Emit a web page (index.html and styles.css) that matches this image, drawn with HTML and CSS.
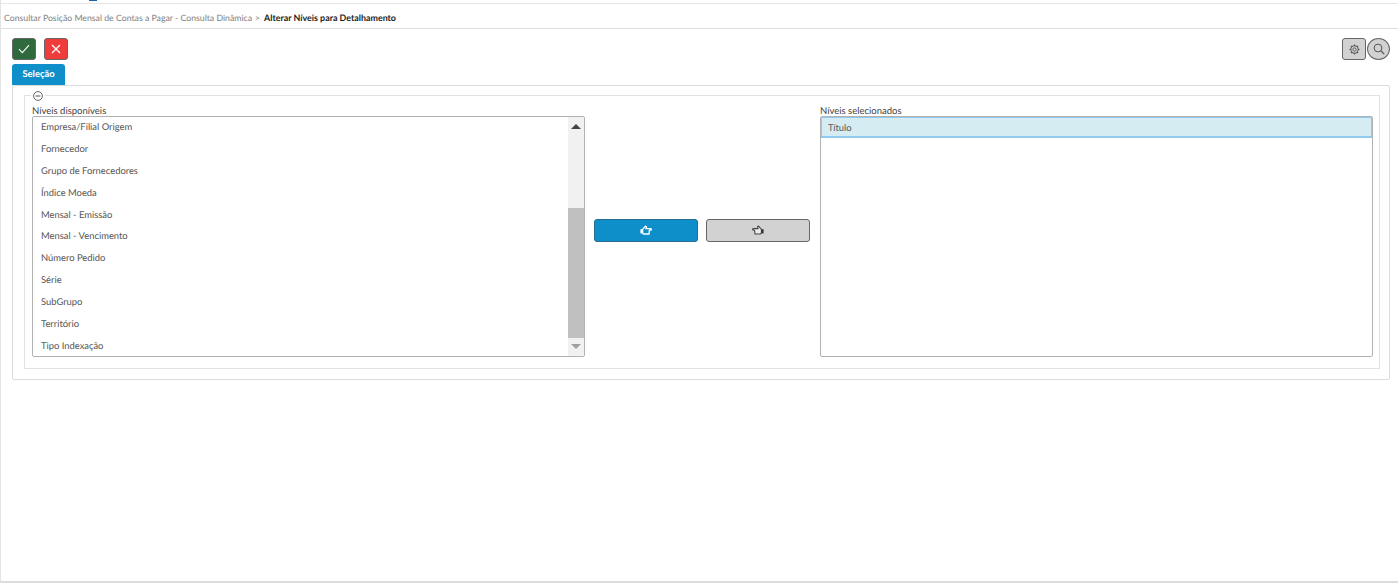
FILE: index.html
```html
<!DOCTYPE html>
<html lang="pt-BR">
<head>
<meta charset="utf-8">
<title>Alterar Níveis para Detalhamento</title>
<link rel="stylesheet" href="styles.css">
</head>
<body>
<div class="page">
  <div class="topstrip"><span class="logo-bit"></span></div>
  <nav class="crumbs">
    <span class="crumb-link">Consultar Posição Mensal de Contas a Pagar - Consulta Dinâmica</span>
    <span class="crumb-sep">&gt;</span>
    <strong class="crumb-current">Alterar Níveis para Detalhamento</strong>
  </nav>
  <main class="content">
    <div class="toolbar">
      <div class="actions">
        <button class="btn btn-ok" aria-label="Confirmar">
          <svg width="12" height="10" viewBox="0 0 12 10"><path d="M1 5.2 4.3 8.6 11 1.2" fill="none" stroke="#fff" stroke-width="1.1"/></svg>
        </button>
        <button class="btn btn-cancel" aria-label="Cancelar">
          <svg width="10" height="10" viewBox="0 0 10 10"><path d="M1 1 9 9M9 1 1 9" fill="none" stroke="#fff" stroke-width="1.3"/></svg>
        </button>
      </div>
      <div class="tools">
        <button class="tool tool-gear" aria-label="Configurar">
          <svg width="11" height="11" viewBox="0 0 12 12"><circle cx="6" cy="6" r="1.8" fill="none" stroke="#555" stroke-width="1"/><circle cx="6" cy="6" r="4" fill="none" stroke="#555" stroke-width="1.1"/><path d="M6 .5v1.6M6 9.9v1.6M.5 6h1.6M9.9 6h1.6M2.1 2.1l1.1 1.1M8.8 8.8l1.1 1.1M9.9 2.1 8.8 3.2M3.2 8.8l-1.1 1.1" stroke="#555" stroke-width="1.2"/></svg>
        </button>
        <button class="tool tool-search" aria-label="Pesquisar">
          <svg width="12" height="12" viewBox="0 0 12 12"><circle cx="5" cy="5" r="3.9" fill="none" stroke="#555" stroke-width="1"/><path d="M8 8l3.2 3.2" stroke="#555" stroke-width="1.2"/></svg>
        </button>
      </div>
    </div>
    <div class="tabs"><span class="tab">Seleção</span></div>
    <section class="panel">
      <div class="fieldset">
        <span class="legend" aria-hidden="true">
          <svg width="10" height="10" viewBox="0 0 10 10"><circle cx="5" cy="5" r="4.4" fill="none" stroke="#555" stroke-width=".9"/><path d="M2.6 5h4.8" stroke="#555" stroke-width="1"/></svg>
        </span>
        <div class="picker">
          <div class="column">
            <label class="field-label">Níveis disponíveis</label>
            <div class="listbox">
              <ul class="items">
                <li>Empresa/Filial Origem</li>
                <li>Fornecedor</li>
                <li>Grupo de Fornecedores</li>
                <li>Índice Moeda</li>
                <li>Mensal - Emissão</li>
                <li>Mensal - Vencimento</li>
                <li>Número Pedido</li>
                <li>Série</li>
                <li>SubGrupo</li>
                <li>Território</li>
                <li>Tipo Indexação</li>
              </ul>
              <div class="scrollbar">
                <span class="arrow arrow-up"></span>
                <span class="thumb"></span>
                <span class="arrow arrow-down"></span>
              </div>
            </div>
          </div>
          <div class="movers">
            <button class="move move-add" aria-label="Adicionar">
              <svg width="12" height="11" viewBox="0 0 12 11"><path d="M2.6 4.4 5.4 1.2l1 .4-.4 2h4.6a.8.8 0 0 1 0 1.6H9.4L9 9H3.6L2.6 8z" fill="none" stroke="#fff" stroke-width="1.3"/><path d="M.4 4.2h2.2v4.2H.4z" fill="#fff"/></svg>
            </button>
            <button class="move move-remove" aria-label="Remover">
              <svg class="flip" width="12" height="11" viewBox="0 0 12 11"><path d="M2.6 4.4 5.4 1.2l1 .4-.4 2h4.6a.8.8 0 0 1 0 1.6H9.4L9 9H3.6L2.6 8z" fill="#ececec" stroke="#444" stroke-width="1.1"/><path d="M.4 4.2h2.2v4.2H.4z" fill="#333"/></svg>
            </button>
          </div>
          <div class="column">
            <label class="field-label">Níveis selecionados</label>
            <div class="listbox">
              <ul class="items">
                <li class="selected">Título</li>
              </ul>
            </div>
          </div>
        </div>
      </div>
    </section>
  </main>
</div>
</body>
</html>
```

FILE: styles.css
```css
* { box-sizing: border-box; }
html, body { margin: 0; height: 100%; background: #fff; }
body { font-family: Lato, "Open Sans", "Liberation Sans", sans-serif; font-size: 9.4px; color: #555; overflow: hidden; text-rendering: geometricPrecision; }
button { font: inherit; padding: 0; cursor: pointer; display: flex; align-items: center; justify-content: center; }

.page { height: 583px; display: flex; flex-direction: column; border-left: 1px solid #e3e3e3; border-bottom: 2px solid #dcdcdc; margin-right: 1px; }

.topstrip { height: 4px; border-bottom: 1px solid #e6e6e6; margin-left: -1px; padding-left: 89px; }
.logo-bit { display: block; width: 8px; height: 1px; background: #1f5fa8; }

.crumbs { height: 25px; border-bottom: 1px solid #dedede; display: flex; align-items: center; gap: 3px; padding: 2px 0 0 3px; font-size: 8.73px; white-space: nowrap; }
.crumb-link { color: #808080; }
.crumb-sep { color: #777; padding-right: 1px; }
.crumb-current { color: #1c1c1c; font-weight: 700; font-size: 8.9px; }

.content { flex: 1; padding: 9px 8px 0 11px; }

.toolbar { display: flex; justify-content: space-between; height: 23px; }
.actions { display: flex; gap: 8px; }
.btn { width: 24px; height: 22px; border: 1px solid #666; border-radius: 3px; }
.btn-ok { background: #2f6a3c; }
.btn-cancel { background: #f13c3c; }
.tools { display: flex; gap: 1px; }
.tool { height: 22px; border: 1px solid #666; background: #d2d2d2; }
.tool-gear { width: 24px; border-radius: 3px; }
.tool-search { width: 23px; border-radius: 50%; }

.tabs { margin-top: 3px; display: flex; }
.tab { width: 53px; height: 21px; display: flex; align-items: center; justify-content: center; background: #0e8fca; color: #fff; font-weight: 700; font-size: 9.4px; border-radius: 3px 3px 0 0; }

.panel { height: 295px; border: 1px solid #dcdcdc; border-radius: 2px; padding: 9px 9px 9px 11px; }
.fieldset { position: relative; height: 274px; border: 1px solid #e2e2e2; padding: 8px 6px 11px 7px; }
.legend { position: absolute; left: 6px; top: -6px; width: 14px; height: 12px; background: #fff; display: flex; align-items: center; justify-content: center; }

.picker { display: grid; grid-template-columns: 553px 1fr 553px; height: 253px; }
.column { display: flex; flex-direction: column; min-width: 0; }
.field-label { height: 12px; line-height: 15px; font-size: 9.5px; color: #444; }

.listbox { flex: none; height: 241px; display: flex; border: 1px solid #b2b2b2; border-radius: 2px; background: #fff; overflow: hidden; }
.items { flex: 1; margin: 0; padding: 0; list-style: none; }
.items li { height: 21.9px; line-height: 22px; padding-left: 8px; font-size: 9.4px; color: #555; white-space: nowrap; }
.items li.selected { height: 21px; line-height: 21.5px; background: #d6ecf3; border: 1px solid #8fcbf0; border-bottom-width: 2px; padding-left: 6px; }

.scrollbar { width: 16px; background: #f1f1f1; display: flex; flex-direction: column; align-items: center; }
.arrow { flex: none; width: 0; height: 0; border-left: 5px solid transparent; border-right: 5px solid transparent; }
.arrow-up { border-bottom: 5px solid #444; margin-top: 7px; }
.thumb { width: 100%; height: 130px; margin-top: 79px; background: #c0c0c0; }
.arrow-down { border-top: 5px solid #a0a0a0; margin-top: 6px; }

.movers { display: flex; justify-content: center; gap: 8px; padding: 103px 1px 0 0; }
.move { margin-top: 12px; width: 104px; height: 23px; border-radius: 3px; }
.move-add { background: #0e8fca; border: 1px solid #2a6a8c; }
.move-remove { background: #d2d2d2; border: 1px solid #666; }
.flip { transform: scaleX(-1); }
```
